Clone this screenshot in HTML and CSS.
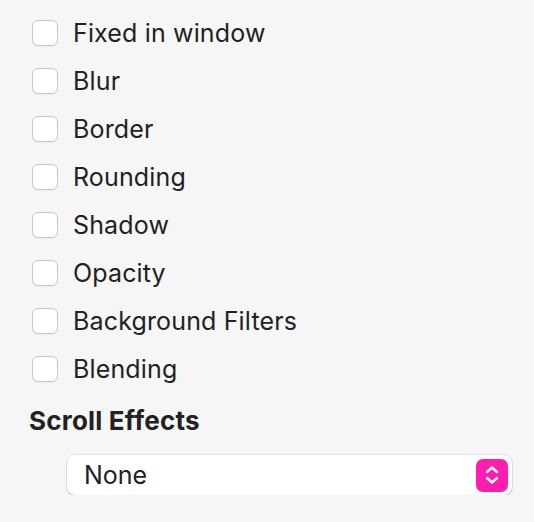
FILE: index.html
```html
<!DOCTYPE html>
<html>
    <head>
        <title>Effects</title>
        <link rel="stylesheet" href="styles.css">
    </head>
    <body>
        <div class="panel">
            <ul class="options">
                <li class="option"><span class="check"></span><span class="label">Fixed in window</span></li>
                <li class="option"><span class="check"></span><span class="label">Blur</span></li>
                <li class="option"><span class="check"></span><span class="label">Border</span></li>
                <li class="option"><span class="check"></span><span class="label">Rounding</span></li>
                <li class="option"><span class="check"></span><span class="label">Shadow</span></li>
                <li class="option"><span class="check"></span><span class="label">Opacity</span></li>
                <li class="option"><span class="check"></span><span class="label">Background Filters</span></li>
                <li class="option"><span class="check"></span><span class="label">Blending</span></li>
            </ul>

            <h2 class="section-title">Scroll Effects</h2>

            <div class="select">
                <span class="select-value">None</span>
                <span class="select-arrows">
                    <svg width="18" height="22" viewBox="0 0 18 22">
                        <path d="M4 8 L9 3.5 L14 8" fill="none" stroke="#fff" stroke-width="2.4" stroke-linecap="round" stroke-linejoin="round"/>
                        <path d="M4 14 L9 18.5 L14 14" fill="none" stroke="#fff" stroke-width="2.4" stroke-linecap="round" stroke-linejoin="round"/>
                    </svg>
                </span>
            </div>
        </div>
    </body>
</html>
```

FILE: styles.css
```css
body {
    margin: 0;
    background: #f6f6f6;
    font-family: Inter, 'Liberation Sans', sans-serif;
    color: #222;
}

.panel {
    padding: 9px 22px 0 29px;
}

.options {
    list-style: none;
    margin: 0;
    padding: 0;
}

.option {
    display: flex;
    align-items: center;
    height: 48px;
    gap: 15px;
    padding-left: 3px;
}

.check {
    width: 24px;
    height: 24px;
    background: #fff;
    border: 1px solid #c9c9c9;
    border-radius: 6px;
    box-shadow: 0 0.5px 1px rgba(0, 0, 0, 0.06);
}

.label {
    font-size: 25px;
    letter-spacing: 0.15px;
    line-height: 1;
}

.section-title {
    margin: 14px 0 0 0;
    font-size: 26px;
    font-weight: 700;
    letter-spacing: 0.2px;
    line-height: 28px;
}

.select {
    display: flex;
    align-items: center;
    justify-content: space-between;
    margin: 20px 0 0 38px;
    height: 40px;
    padding: 0 4px 0 17px;
    background: #fff;
    border-radius: 8px;
    box-shadow: 0 0 0 0.5px rgba(0, 0, 0, 0.12), 0 1px 2px rgba(0, 0, 0, 0.2);
}

.select-value {
    font-size: 25px;
}

.select-arrows {
    display: flex;
    align-items: center;
    justify-content: center;
    width: 32px;
    height: 33px;
    border-radius: 7px;
    background: #ff1db0;
}
```
